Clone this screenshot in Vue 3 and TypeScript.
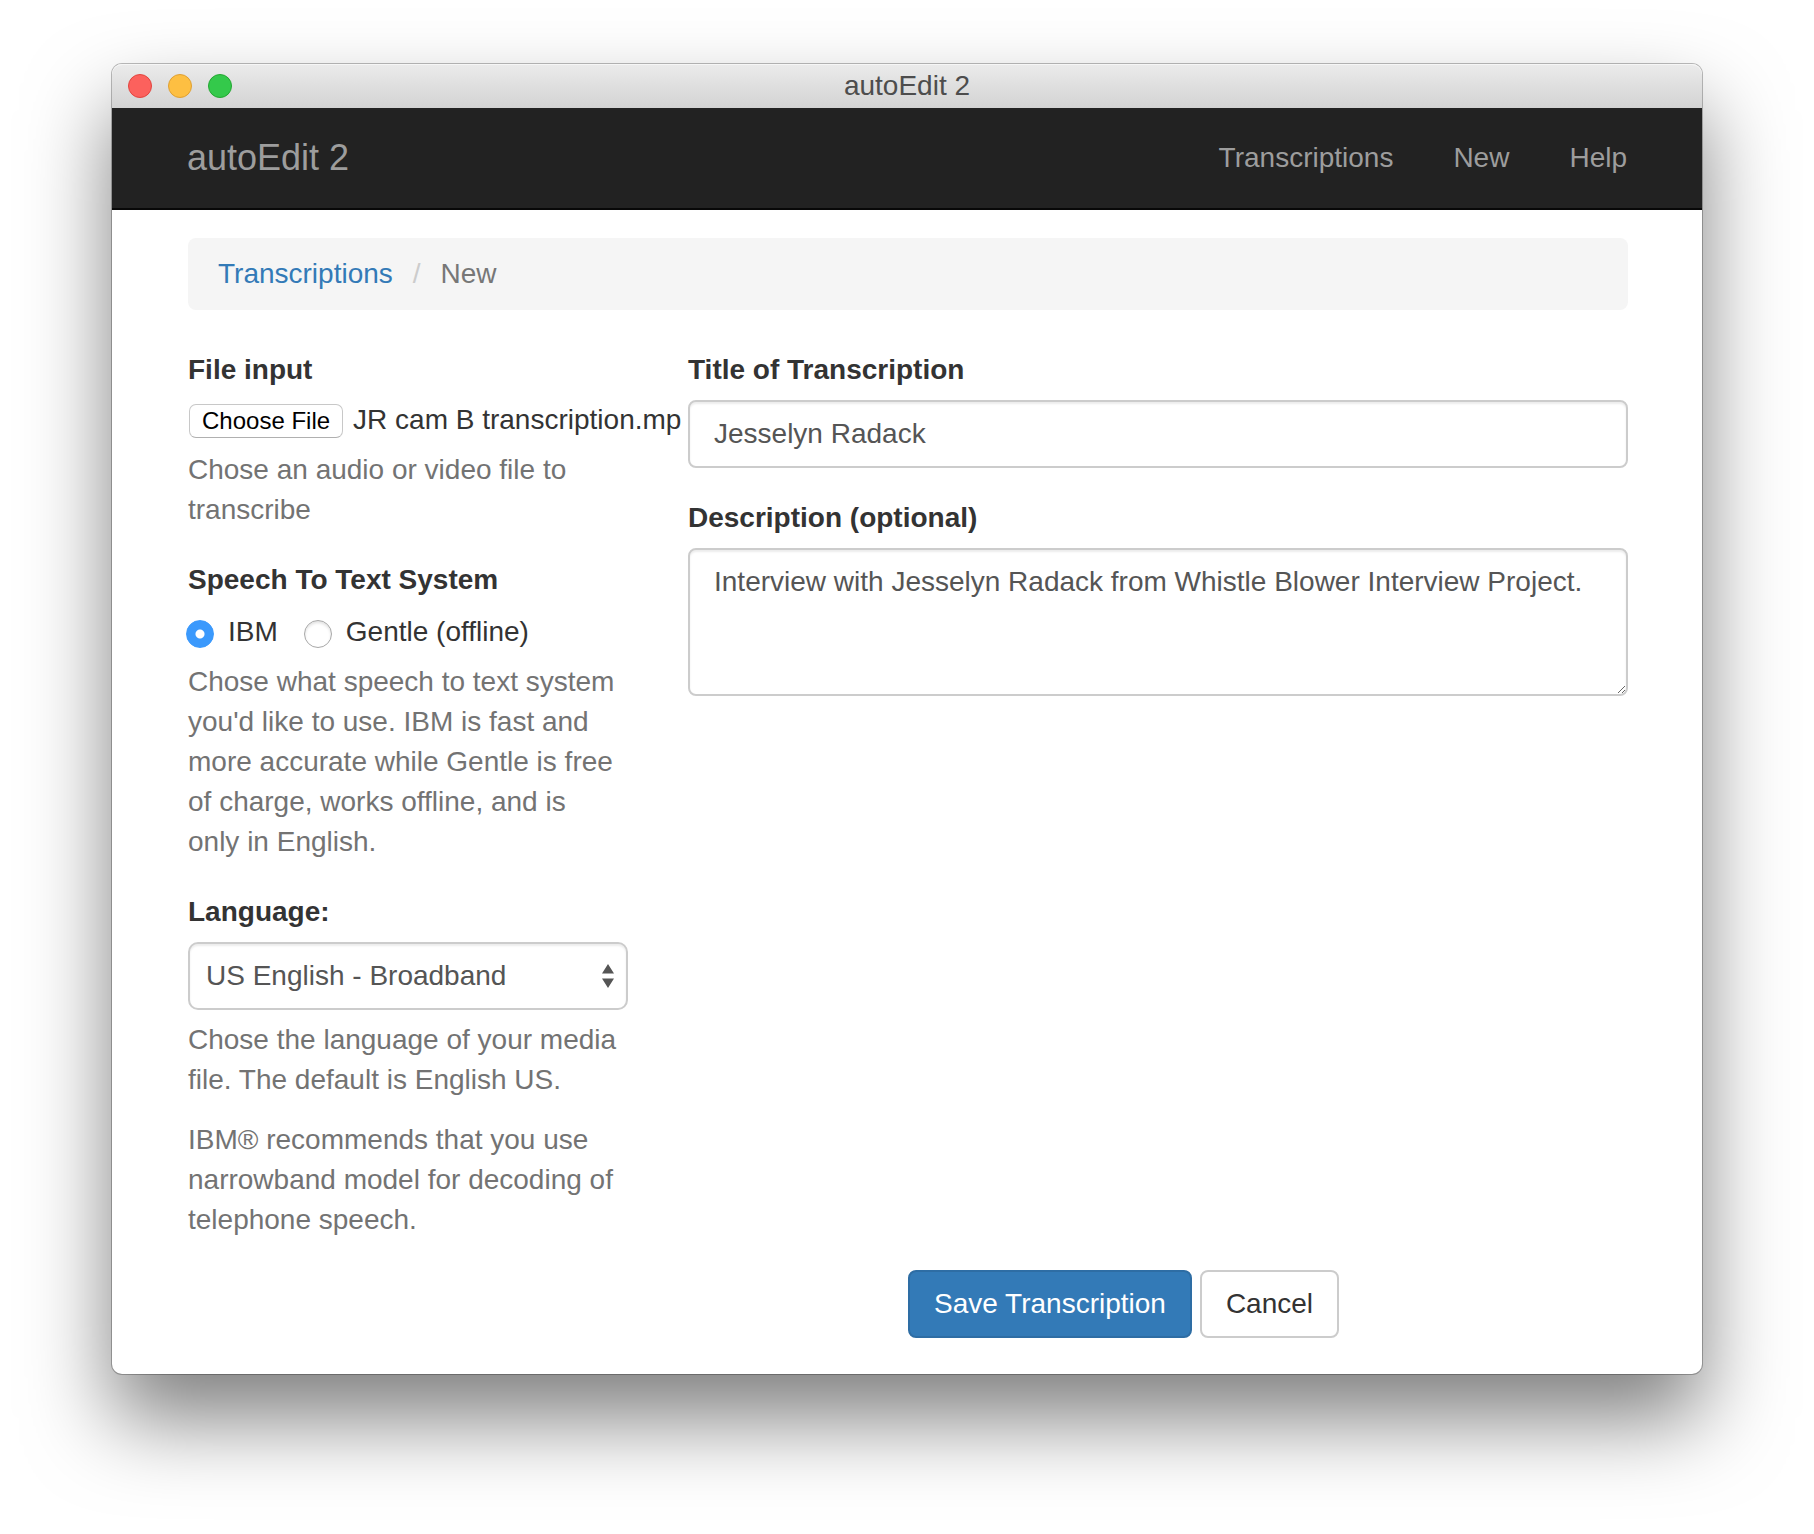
<script setup lang="ts">
import { onMounted, ref } from 'vue'

interface Link {
  label: string
  href: string
}

const appName = 'autoEdit 2'
const links: Link[] = [
  { label: 'Transcriptions', href: '#transcriptions' },
  { label: 'New', href: '#new' },
  { label: 'Help', href: '#help' },
]
const systems = [
  { value: 'ibm', label: 'IBM' },
  { value: 'gentle', label: 'Gentle (offline)' },
]

const fileInput = ref<HTMLInputElement | null>(null)
const system = ref('ibm')
const language = ref('en-US')
const title = ref('Jesselyn Radack')
const description = ref('Interview with Jesselyn Radack from Whistle Blower Interview Project.')

onMounted(() => {
  if (!fileInput.value) return
  const transfer = new DataTransfer()
  transfer.items.add(new File([], 'JR cam B transcription.mp'))
  fileInput.value.files = transfer.files
})
</script>

<template>
  <div class="desktop">
    <div class="window">
      <header class="titlebar">
        <div class="lights">
          <button type="button" class="light close" aria-label="Close"></button>
          <button type="button" class="light minimise" aria-label="Minimise"></button>
          <button type="button" class="light zoom" aria-label="Zoom"></button>
        </div>
        <span class="window-title">{{ appName }}</span>
      </header>

      <nav class="navbar">
        <a class="brand" href="#">{{ appName }}</a>
        <ul class="nav-links">
          <li v-for="link in links" :key="link.label">
            <a :href="link.href">{{ link.label }}</a>
          </li>
        </ul>
      </nav>

      <main class="container">
        <ol class="breadcrumb">
          <li><a href="#transcriptions">Transcriptions</a></li>
          <li class="separator" aria-hidden="true">/</li>
          <li>New</li>
        </ol>

        <form @submit.prevent>
          <div class="columns">
            <div class="settings">
              <div class="group">
                <label class="heading" for="media">File input</label>
                <input id="media" ref="fileInput" class="file" type="file" />
                <p class="help">Chose an audio or video file to transcribe</p>
              </div>

              <div class="group" role="radiogroup" aria-labelledby="system-heading">
                <span id="system-heading" class="heading">Speech To Text System</span>
                <div class="radios">
                  <label v-for="item in systems" :key="item.value" class="radio">
                    <input v-model="system" type="radio" name="system" :value="item.value" />
                    {{ item.label }}
                  </label>
                </div>
                <p class="help">
                  Chose what speech to text system you'd like to use. IBM is fast and more accurate
                  while Gentle is free of charge, works offline, and is only in English.
                </p>
              </div>

              <div class="group">
                <label class="heading" for="language">Language:</label>
                <div class="select-wrap">
                  <select id="language" v-model="language" class="control select">
                    <option value="en-US">US English - Broadband</option>
                  </select>
                  <svg class="arrows" viewBox="0 0 12 24" width="12" height="24" aria-hidden="true">
                    <path d="M6 0 12 9.500H0zM6 24 0 14.500h12z" fill="#555" />
                  </svg>
                </div>
                <p class="help">
                  Chose the language of your media file. The default is English US.
                </p>
                <p class="help note">
                  IBM® recommends that you use narrowband model for decoding of telephone speech.
                </p>
              </div>
            </div>

            <div class="details">
              <div class="group">
                <label class="heading" for="title">Title of Transcription</label>
                <input id="title" v-model="title" class="control" type="text" />
              </div>
              <div class="group">
                <label class="heading" for="description">Description (optional)</label>
                <textarea id="description" v-model="description" class="control area"></textarea>
              </div>
            </div>
          </div>

          <div class="actions">
            <button type="submit" class="button primary">Save Transcription</button>
            <button type="button" class="button">Cancel</button>
          </div>
        </form>
      </main>
    </div>
  </div>
</template>

<style>
body {
  margin: 0;
  background: #fff;
}
</style>

<style scoped>
.desktop {
  padding: 64px 112px 160px;
  color: #333;
  font-family: "Liberation Sans", Arial, sans-serif;
  font-size: 28px;
  line-height: 40px;
}

.desktop *,
.desktop *::before {
  box-sizing: border-box;
}

.window {
  border-radius: 10px;
  background: #fff;
  box-shadow:
    0 0 0 1px rgba(0, 0, 0, 0.26),
    0 45px 84px rgba(0, 0, 0, 0.5);
}

.titlebar {
  display: grid;
  grid-template-columns: 1fr auto 1fr;
  align-items: center;
  height: 44px;
  padding: 0 16px;
  border-radius: 10px 10px 0 0;
  background: linear-gradient(#ebebeb, #d3d3d3);
  box-shadow: inset 0 1px 0 #f6f6f6;
}

.lights {
  display: flex;
  gap: 16px;
}

.light {
  width: 24px;
  height: 24px;
  padding: 0;
  border: 1px solid;
  border-radius: 50%;
}

.close {
  border-color: #e2453f;
  background: #fc615d;
}

.minimise {
  border-color: #dfa033;
  background: #fdbf42;
}

.zoom {
  border-color: #24a732;
  background: #34c94b;
}

.window-title {
  color: #4d4d4d;
}

.navbar {
  display: flex;
  justify-content: space-between;
  padding: 30px 75px;
  border-bottom: 2px solid #080808;
  background: #222;
}

.navbar a {
  color: #9d9d9d;
  text-decoration: none;
}

.brand {
  font-size: 36px;
}

.nav-links {
  display: flex;
  gap: 60px;
  margin: 0;
  padding: 0;
  list-style: none;
}

.container {
  padding: 28px 74px 36px 76px;
}

.breadcrumb {
  display: flex;
  margin: 0 0 40px;
  padding: 16px 30px;
  border-radius: 8px;
  background: #f5f5f5;
  color: #777;
  list-style: none;
}

.breadcrumb a {
  color: #337ab7;
  text-decoration: none;
}

.separator {
  padding: 0 20px;
  color: #ccc;
}

.columns {
  display: grid;
  grid-template-columns: 1fr 2fr;
  margin: 0 -30px;
}

.settings,
.details {
  min-width: 0;
  padding: 0 30px;
}

.details {
  position: relative;
  z-index: 1;
}

.group {
  margin-bottom: 30px;
}

.heading {
  display: block;
  margin-bottom: 10px;
  font-weight: 700;
}

.help {
  margin: 10px 0 0;
  padding-right: 8px;
  color: #737373;
}

.note {
  margin-top: 20px;
}

.file {
  display: block;
  width: 540px;
  height: 40px;
  padding: 4px 0 0 1px;
  color: #333;
  font: inherit;
  line-height: 32px;
}

.file::file-selector-button {
  height: 34px;
  margin: 0 10px 0 0;
  padding: 0 12px;
  border: 1px solid #c8c8c8;
  border-bottom-color: #b0b0b0;
  border-radius: 7px;
  background: #fff;
  color: #000;
  font-family: inherit;
  font-size: 24px;
  line-height: 32px;
}

.radios {
  display: flex;
  gap: 28px;
  height: 42px;
}

.radio {
  display: flex;
  gap: 14px;
  line-height: 44px;
}

.radio input {
  appearance: none;
  width: 28px;
  height: 28px;
  margin: 10px 0 0 -2px;
  border: 1px solid #a8a8a8;
  border-radius: 50%;
  background: #fff;
  box-shadow: inset 0 2px 3px rgba(0, 0, 0, 0.12);
}

.radio input:checked {
  border-color: #3b99fc;
  background: radial-gradient(circle, #fff 4px, #3b99fc 5px);
  box-shadow: none;
}

.control {
  display: block;
  width: 100%;
  height: 68px;
  padding: 12px 24px;
  border: 2px solid #ccc;
  border-radius: 8px;
  background: #fff;
  box-shadow: inset 0 2px 2px rgba(0, 0, 0, 0.075);
  color: #555;
  font: inherit;
}

.area {
  height: 148px;
  resize: vertical;
}

.select-wrap {
  position: relative;
}

.select {
  appearance: none;
  padding: 12px 40px 12px 16px;
  border-radius: 10px;
}

.arrows {
  position: absolute;
  top: 22px;
  right: 14px;
  pointer-events: none;
}

.actions {
  display: flex;
  gap: 8px;
  margin-left: 50%;
}

.button {
  padding: 12px 24px;
  border: 2px solid #ccc;
  border-radius: 8px;
  background: #fff;
  color: #333;
  font: inherit;
}

.primary {
  border-color: #2e6da4;
  background: #337ab7;
  color: #fff;
}
</style>
